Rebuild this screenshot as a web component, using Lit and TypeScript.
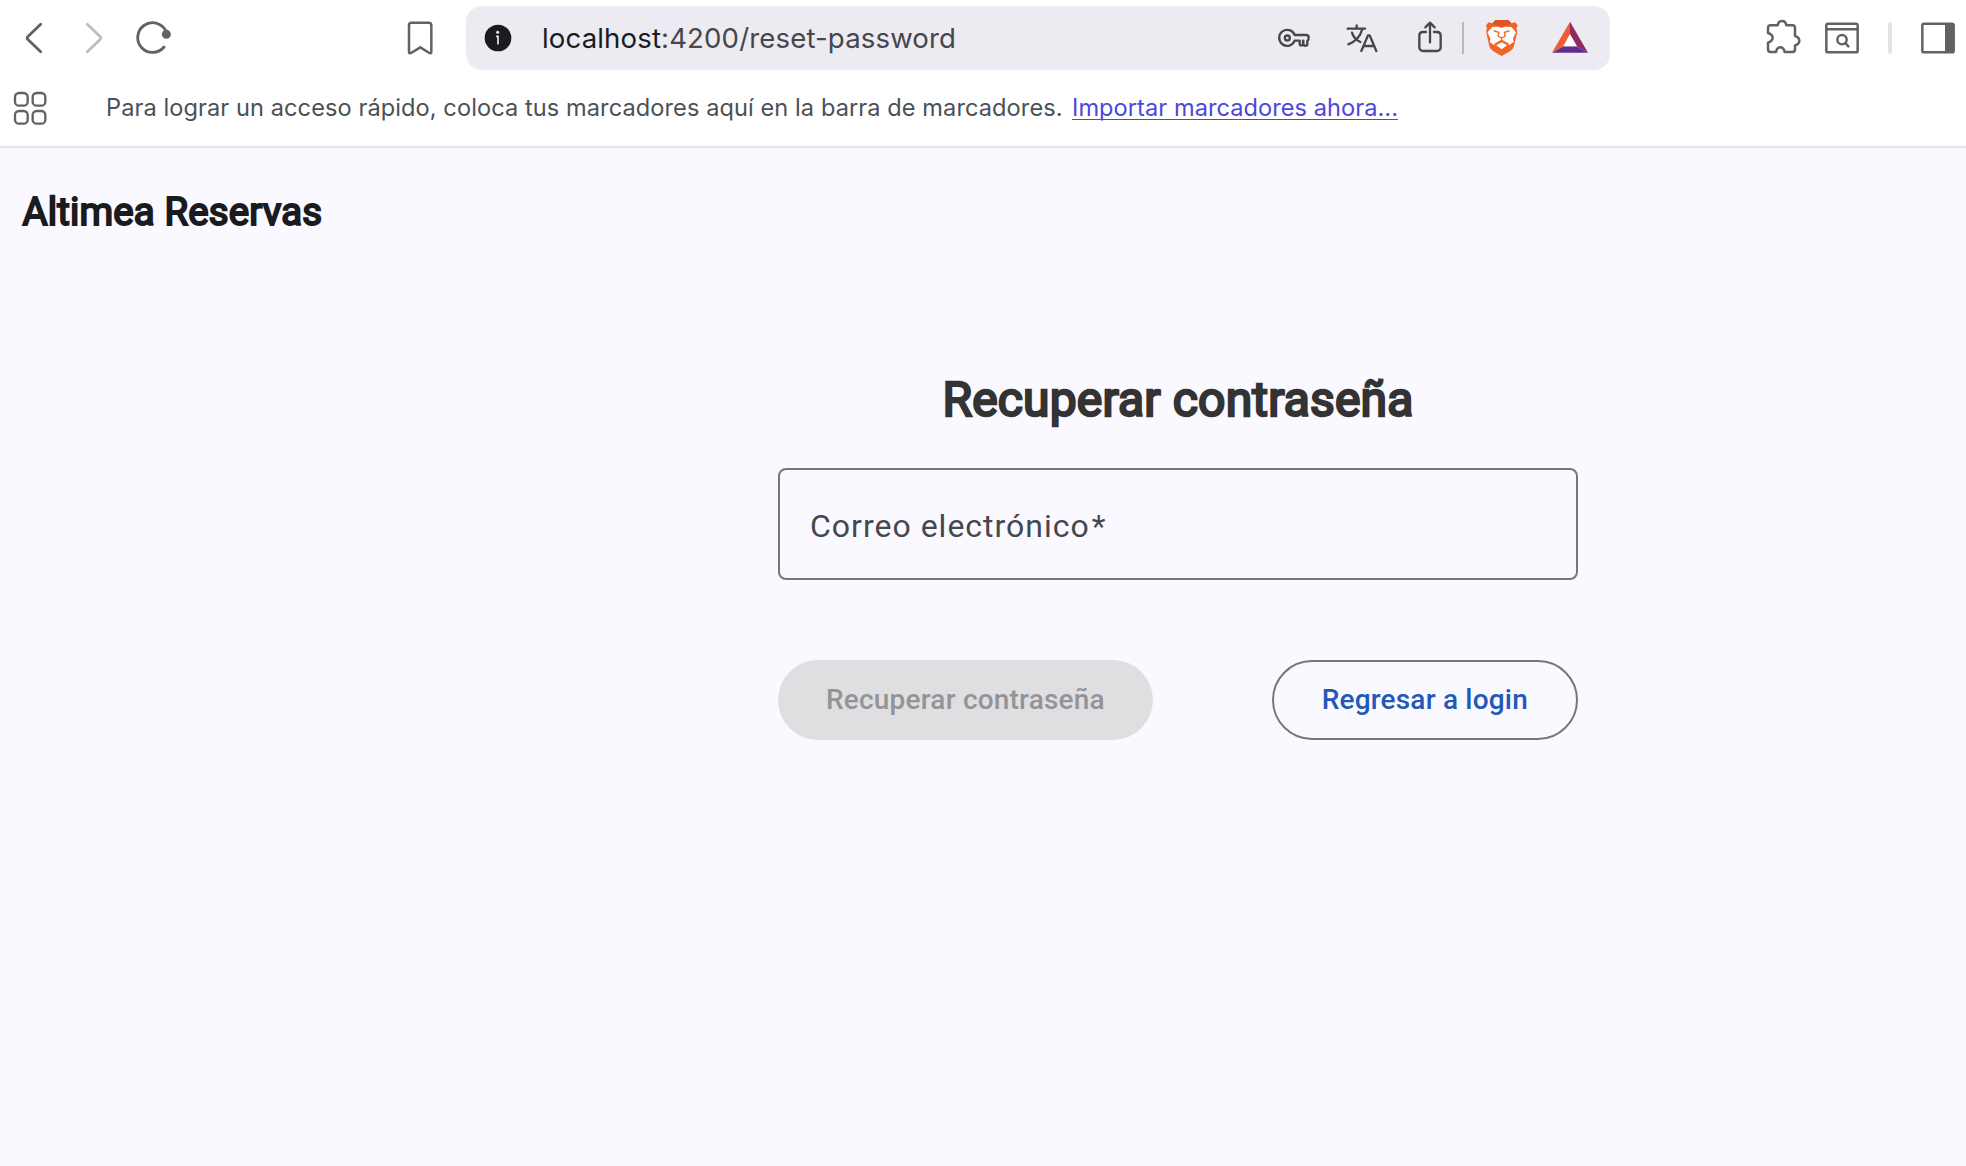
import { LitElement, html, css } from "lit";
import { customElement } from "lit/decorators.js";

@customElement("browser-toolbar")
class BrowserToolbar extends LitElement {
  static styles = css`
    :host { display: block; height: 76px; background: #fff; }
    .bar { display: grid; grid-template-columns: 442px 1144px 1fr; column-gap: 24px; padding-top: 6px; height: 64px; }
    .nav { display: flex; gap: 16px; padding-left: 16px; }
    .mark { margin-left: auto; }
    svg { display: block; height: 64px; width: 44px; flex: none; fill: none; stroke: #616266; stroke-width: 7.5; stroke-linecap: round; stroke-linejoin: round; }
    .nav svg { stroke-width: 8.5; }
    .nav svg.mark { stroke-width: 7.5; }
    .off { stroke: #bdbdbf; }
    .pill { display: flex; align-items: center; background: #ecebf2; border-radius: 16px; padding-left: 10px; }
    .url { font: 27.6px/64px Inter, sans-serif; color: #46464b; margin-left: 22px; letter-spacing: 0.13px; white-space: pre; }
    .host { color: #1b1b1f; }
    .tools { display: flex; align-items: center; margin-left: auto; }
    .tools svg { stroke: #46464b; width: 68px; stroke-width: 7; }
    .tools svg.w66 { width: 66px; }
    .tools svg.w76 { width: 76px; }
    .tools svg.w70 { width: 70px; }
    .sep { width: 2px; height: 32px; background: #b9b8bd; }
    .right { display: flex; align-items: center; justify-content: flex-end; padding-right: 3px; }
    .right .gap { margin-left: 14px; }
    .rsep { width: 4px; height: 32px; border-radius: 2px; background: #e2e2e8; margin: 0 27px 0 25px; }
  `;
  render() {
    return html`<div class="bar">
      <div class="nav">
        <svg viewBox="48 18 132 192"><path d="M122 73 83 110Q80 114 83 118L122 155" /></svg>
        <svg class="off" viewBox="228 18 132 192"><path d="M262 73 301 110Q304 114 301 118L262 155" /></svg>
        <svg viewBox="408 18 132 192"><path d="M497 92A44.500 44.500 0 1 0 492 141" /><circle cx="499" cy="103" r="13.500" fill="#616266" stroke="none" /></svg>
        <svg class="mark" viewBox="1194 18 132 192"><path d="M1234 68h52q8 0 8 8v79q0 7-6 4l-27-17-28 17q-6 3-6-4V76q0-8 7-8z" /></svg>
      </div>
      <div class="pill">
        <svg viewBox="48 18 132 192"><circle cx="114" cy="114" r="40" fill="#1b1b1f" stroke="none" /><path d="M110 109h4v22" stroke="#ecebf2" stroke-width="5" /><circle cx="113" cy="97" r="4.500" fill="#ecebf2" stroke="none" /></svg>
        <span class="url"><span class="host">localhost</span>:4200/reset-password</span>
        <div class="tools">
          <svg viewBox="30 18 204 192"><path d="M134 105A24 24 0 1 0 134 122H149V131q0 5 5 5t5-5V122H160V131q0 7 7 6 5 0 5-6V123Q177 119 176 111 175 105 168 105z" /><circle cx="112" cy="114" r="7.500" /></svg>
          <svg viewBox="234 18 204 192"><path d="M293 86h52M320 76v9M337 87Q328 120 295 133M306 98Q312 118 331 126" /><path d="M334 153 354 106h5L379 153M341 138H372" /></svg>
          <svg class="w66" viewBox="438 18 198 192"><path d="M528 96H519q-11 0-11 11v34q0 12 12 12h40q12 0 12-12V107q0-11-11-11H552M540 127V69M526 82 540 68 554 82" /></svg>
          <span class="sep"></span>
          <svg class="w76" viewBox="642 18 228 192"><g stroke="none"><path fill="#ed6528" d="M736 60H775L784 70 795 67 803 76 799 86 802 94 792 139Q789 149 780 154L755 168 730 154Q721 149 718 139L708 94 711 86 708 76 716 67 727 70z" /><path fill="#d95427" d="M736 60H775L784 70 775 76 755 78 735 76 727 70z" /><path fill="#fff" d="M727 81 744 80 755 84 767 80 784 81 798 97 789 115 791 126 778 135 755 121 732 135 719 126 721 115 712 97z" /><path fill="#fff" d="M739 136 755 127 771 136 755 148z" /><path fill="none" stroke="#ed6528" stroke-width="4" d="M733 93 747 97 744 108 755 114 766 108 763 97 777 93M755 114V122M735 132 755 121 775 132" /></g></svg>
          <svg class="w70" viewBox="870 18 210 192"><g stroke="none"><path fill="#f15a35" d="M960 65V105L941 139 906 158z" /><path fill="#922861" d="M960 65 1014 158 979 139 960 105z" /><path fill="#5e2f8d" d="M906 158 941 139H979L1014 158z" /><path fill="#fff" d="M960 102 981 139H940z" /></g></svg>
        </div>
      </div>
      <div class="right">
        <svg viewBox="63 18 132 192"><path d="M92 76H113Q115 63 126 63T139 76H157Q165 76 165 84V108Q178 112 178 122T165 136V148Q165 156 157 156H134Q131 142 121 142T108 156H92Q84 156 84 148V128Q98 122 98 113T84 99V84Q84 76 92 76z" /></svg>
        <svg class="gap" viewBox="237 18 132 192"><rect x="259" y="71" width="94" height="86" rx="5" /><path d="M259 88h94" /><circle cx="306" cy="119" r="14" /><path d="M316 129 325 139" /></svg>
        <span class="rsep"></span>
        <svg viewBox="537 18 132 192"><rect x="547" y="71" width="94" height="86" rx="5" /><path fill="#616266" stroke="none" d="M615 70H641V158H615z" /></svg>
      </div>
    </div>`;
  }
}

@customElement("bookmarks-bar")
class BookmarksBar extends LitElement {
  static styles = css`
    :host { display: block; background: #fff; border-bottom: 2px solid #e3e3e8; height: 70px; }
    .row { display: flex; align-items: center; height: 64px; font: 23.6px/64px Inter, sans-serif; color: #4b5157; white-space: pre; }
    svg { width: 44px; height: 64px; flex: none; fill: none; stroke: #616266; stroke-width: 7; margin-left: 8px; }
    .msg { margin-left: 54px; letter-spacing: 0.075px; }
    .link { color: #4c47dd; margin-left: 9.4px; line-height: 23px; border-bottom: 1px solid #4c47dd; letter-spacing: 0.05px; }
  `;
  render() {
    return html`<div class="row">
      <svg viewBox="24 228 132 192"><rect x="45" y="279" width="38" height="38" rx="12" /><rect x="98" y="279" width="38" height="38" rx="12" /><rect x="45" y="333" width="38" height="38" rx="12" /><rect x="98" y="333" width="38" height="38" rx="12" /></svg>
      <span class="msg">Para lograr un acceso rápido, coloca tus marcadores aquí en la barra de marcadores.</span>
      <span class="link">Importar marcadores ahora...</span>
    </div>`;
  }
}

@customElement("reset-form")
class ResetForm extends LitElement {
  static styles = css`
    :host { display: block; width: 800px; font-family: Roboto, sans-serif; }
    .title { margin: 0; text-align: center; font-size: 48px; line-height: 56px; font-weight: 400; color: #333; letter-spacing: 0.18px; -webkit-text-stroke: 2.4px #333; }
    .field { box-sizing: border-box; height: 112px; margin-top: 40px; border: 2px solid #74777f; border-radius: 8px; padding: 0 30px; font-size: 32px; line-height: 112px; letter-spacing: 1px; color: #44474e; }
    .required { margin-left: 2px; }
    .actions { display: flex; justify-content: space-between; margin-top: 80px; }
    .btn { box-sizing: border-box; height: 80px; border-radius: 40px; border: 0; padding: 0 48px; font: 500 28px/78px Roboto, sans-serif; letter-spacing: 0.2px; white-space: nowrap; }
    .main { background: #dfdfe1; color: #949498; }
    .alt { background: transparent; border: 2px solid #74777f; color: #2259b8; line-height: 74px; }
  `;
  render() {
    return html`<h2 class="title">Recuperar contraseña</h2>
      <div class="field">Correo electrónico<span class="required">*</span></div>
      <div class="actions">
        <button class="btn main">Recuperar contraseña</button>
        <button class="btn alt">Regresar a login</button>
      </div>`;
  }
}

@customElement("app-root")
class AppRoot extends LitElement {
  static styles = css`
    :host { display: block; height: 1166px; overflow: hidden; background: #faf9ff; }
    .brand { margin: 0; padding: 40px 0 0 22.5px; font: 400 38.4px/48px Roboto, sans-serif; letter-spacing: 0.16px; color: #1a1b1f; -webkit-text-stroke: 2px #1a1b1f; }
    .content { padding: 136px 0 0 778px; }
  `;
  render() {
    return html`<browser-toolbar></browser-toolbar><bookmarks-bar></bookmarks-bar>
      <h1 class="brand">Altimea Reservas</h1>
      <main class="content"><reset-form></reset-form></main>`;
  }
}
